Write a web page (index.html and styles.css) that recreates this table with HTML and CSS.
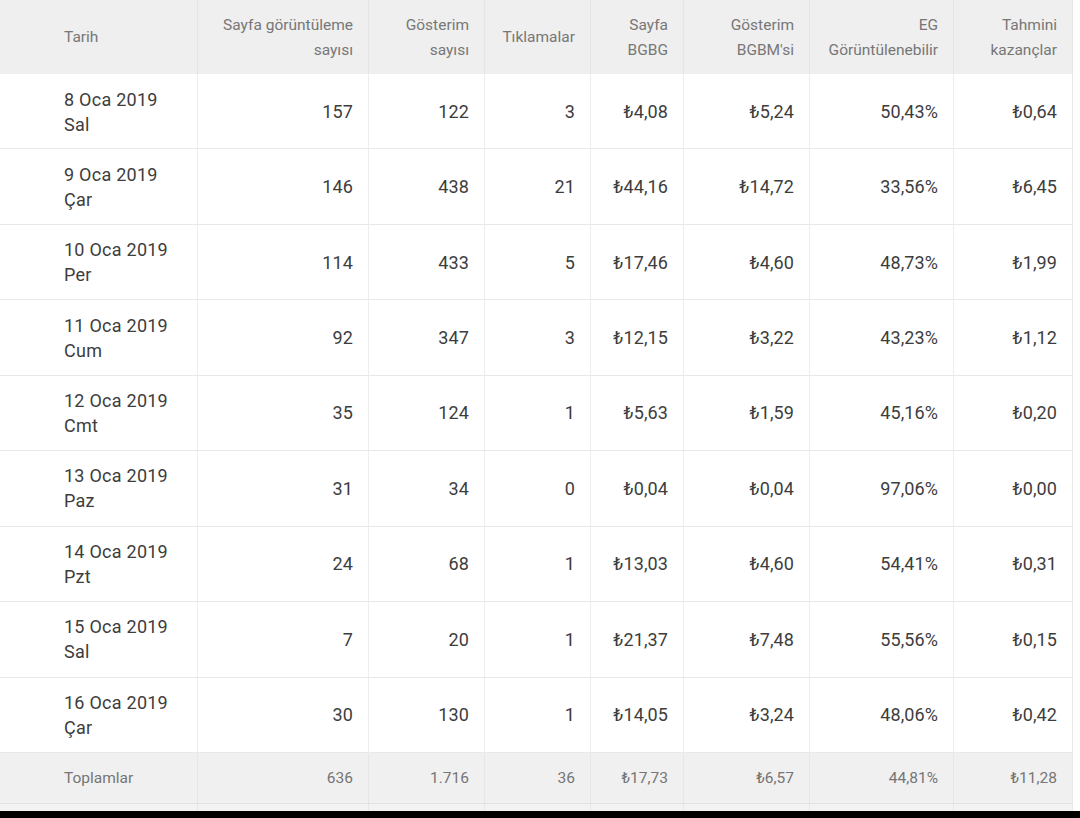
FILE: index.html
```html
<!DOCTYPE html>
<html lang="tr">
<head>
<meta charset="utf-8">
<title>Rapor</title>
<link rel="stylesheet" href="styles.css">
</head>
<body>
<div class="page">
  <table class="report">
    <colgroup>
      <col class="c-date">
      <col class="c-pv">
      <col class="c-imp">
      <col class="c-clk">
      <col class="c-rpm">
      <col class="c-irpm">
      <col class="c-view">
      <col class="c-earn">
    </colgroup>
    <thead>
      <tr>
        <th class="left">Tarih</th>
        <th>Sayfa görüntüleme<br>sayısı</th>
        <th>Gösterim<br>sayısı</th>
        <th>Tıklamalar</th>
        <th>Sayfa<br>BGBG</th>
        <th>Gösterim<br>BGBM'si</th>
        <th>EG<br>Görüntülenebilir</th>
        <th>Tahmini<br>kazançlar</th>
      </tr>
    </thead>
    <tbody>
      <tr><td class="left">8 Oca 2019<br>Sal</td><td>157</td><td>122</td><td>3</td><td>₺4,08</td><td>₺5,24</td><td>50,43%</td><td>₺0,64</td></tr>
      <tr><td class="left">9 Oca 2019<br>Çar</td><td>146</td><td>438</td><td>21</td><td>₺44,16</td><td>₺14,72</td><td>33,56%</td><td>₺6,45</td></tr>
      <tr><td class="left">10 Oca 2019<br>Per</td><td>114</td><td>433</td><td>5</td><td>₺17,46</td><td>₺4,60</td><td>48,73%</td><td>₺1,99</td></tr>
      <tr><td class="left">11 Oca 2019<br>Cum</td><td>92</td><td>347</td><td>3</td><td>₺12,15</td><td>₺3,22</td><td>43,23%</td><td>₺1,12</td></tr>
      <tr><td class="left">12 Oca 2019<br>Cmt</td><td>35</td><td>124</td><td>1</td><td>₺5,63</td><td>₺1,59</td><td>45,16%</td><td>₺0,20</td></tr>
      <tr><td class="left">13 Oca 2019<br>Paz</td><td>31</td><td>34</td><td>0</td><td>₺0,04</td><td>₺0,04</td><td>97,06%</td><td>₺0,00</td></tr>
      <tr><td class="left">14 Oca 2019<br>Pzt</td><td>24</td><td>68</td><td>1</td><td>₺13,03</td><td>₺4,60</td><td>54,41%</td><td>₺0,31</td></tr>
      <tr><td class="left">15 Oca 2019<br>Sal</td><td>7</td><td>20</td><td>1</td><td>₺21,37</td><td>₺7,48</td><td>55,56%</td><td>₺0,15</td></tr>
      <tr><td class="left">16 Oca 2019<br>Çar</td><td>30</td><td>130</td><td>1</td><td>₺14,05</td><td>₺3,24</td><td>48,06%</td><td>₺0,42</td></tr>
    </tbody>
    <tfoot>
      <tr class="totals"><td class="left">Toplamlar</td><td>636</td><td>1.716</td><td>36</td><td>₺17,73</td><td>₺6,57</td><td>44,81%</td><td>₺11,28</td></tr>
      <tr class="tail"><td></td><td></td><td></td><td></td><td></td><td></td><td></td><td></td></tr>
    </tfoot>
  </table>
  <div class="bar"></div>
</div>
</body>
</html>
```
FILE: styles.css
```css
* { box-sizing: border-box; }
html, body { margin: 0; padding: 0; background: #ffffff; }
body { font-family: Roboto, "Liberation Sans", Arial, sans-serif; }

.page {
  width: 1080px;
  height: 818px;
  display: flex;
  flex-direction: column;
  overflow: hidden;
}

.report {
  width: 1073px;
  border-collapse: separate;
  border-spacing: 0;
  table-layout: fixed;
  flex: none;
}

.c-date { width: 197px; }
.c-pv { width: 171px; }
.c-imp { width: 116px; }
.c-clk { width: 106px; }
.c-rpm { width: 93px; }
.c-irpm { width: 126px; }
.c-view { width: 144px; }
.c-earn { width: 120px; }

.report th,
.report td {
  text-align: right;
  vertical-align: middle;
  padding: 0 15px 0 0;
  border-left: 1px solid #ededed;
}
.report th:first-child,
.report td:first-child { border-left: none; }

.report .left { text-align: left; padding-left: 64px; }

.report thead tr { height: 74px; }
.report th {
  background: #efefef;
  border-left-color: #e5e5e5;
  color: #777777;
  font-weight: 400;
  font-size: 15.5px;
  line-height: 25px;
  padding-top: 1px;
}
.report thead tr th:last-child { border-right: 1px solid #e5e5e5; }

.report tbody tr { height: 75.44px; }
.report tbody td {
  color: #3d3d3d;
  font-size: 18px;
  line-height: 25px;
  letter-spacing: 0.25px;
  border-bottom: 1px solid #e8e8e8;
}
.report tbody td:not(.left) { letter-spacing: 0.1px; }
.report tbody tr:first-child td { padding-top: 1px; }
.report tbody td:last-child,
.report tfoot td:last-child { border-right: 1px solid #e8e8e8; }

.report .totals { height: 51px; }
.report .totals td {
  background: #f0f0f0;
  color: #757575;
  font-size: 15.5px;
  line-height: 20px;
  border-bottom: 1px solid #e2e2e2;
  border-left-color: #e6e6e6;
}
.report .tail { height: 7px; }
.report .tail td {
  background: #f3f3f3;
  border-left-color: #e6e6e6;
  padding: 0;
}

.bar { flex: 1; background: #000000; }
```
